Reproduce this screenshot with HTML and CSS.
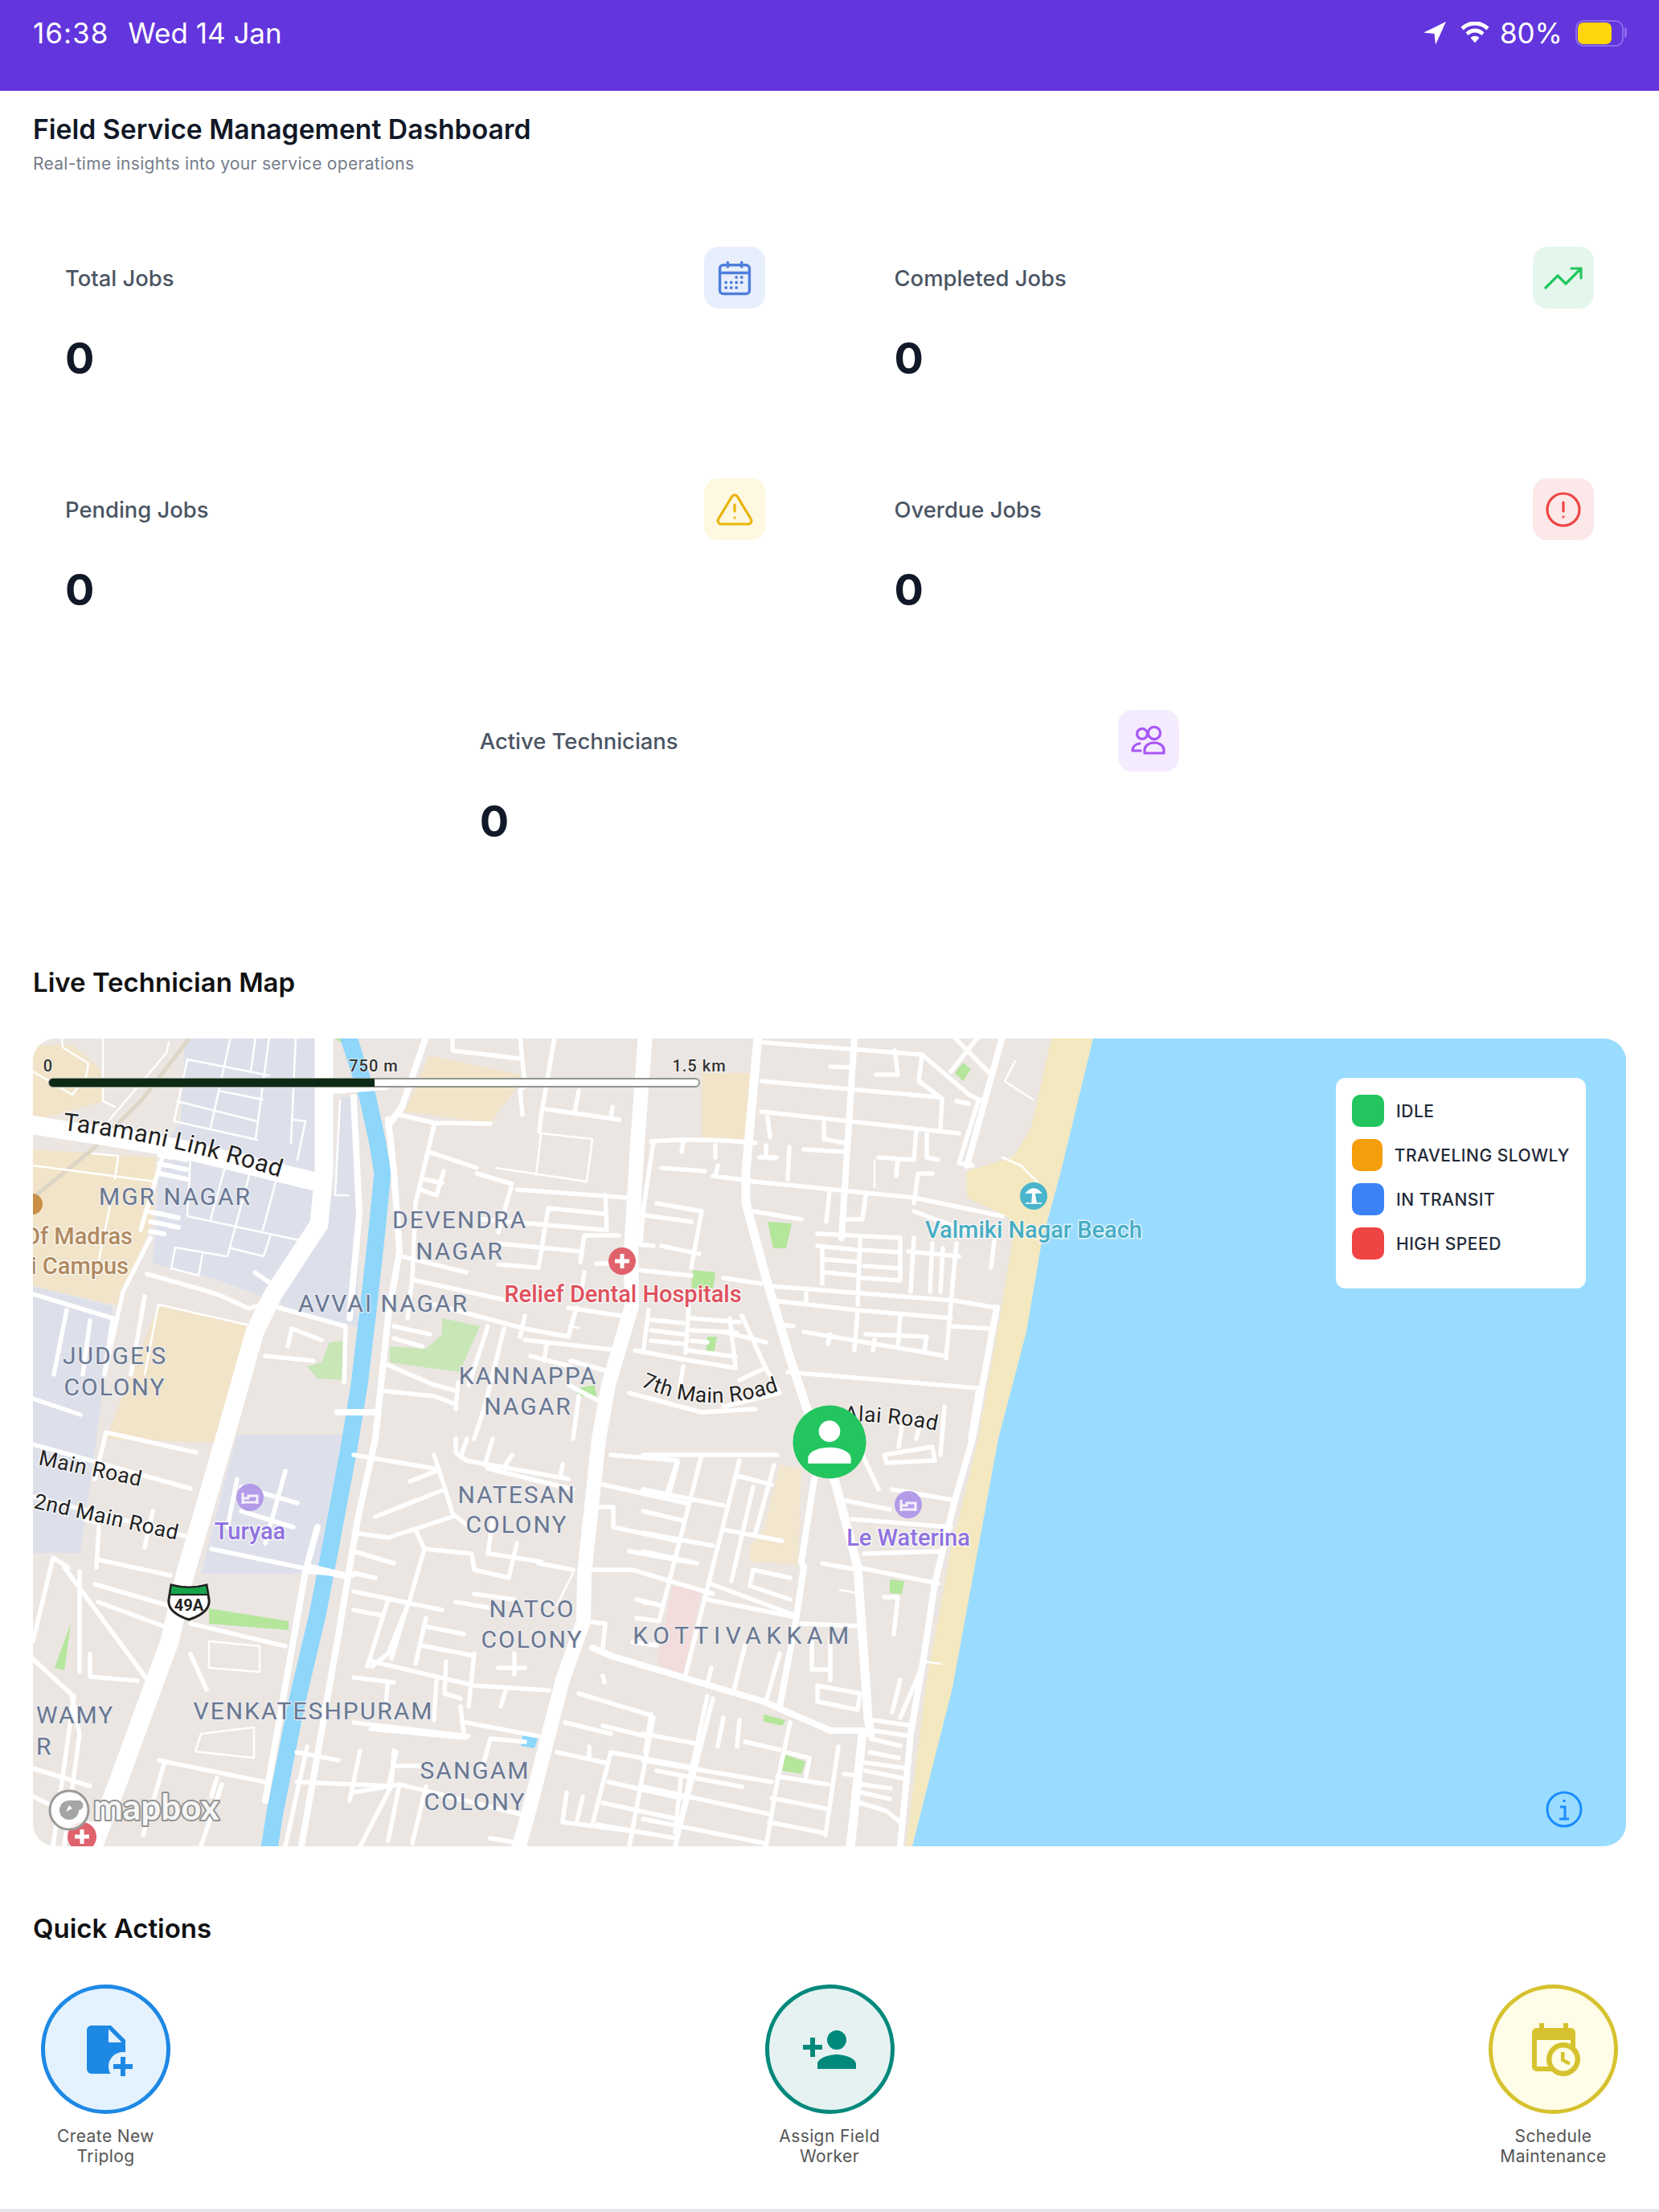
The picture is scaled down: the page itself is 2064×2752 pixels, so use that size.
FILE: index.html
```html
<!DOCTYPE html>
<html lang="en">
<head>
    <meta charset="UTF-8">
    <title>Field Service Management Dashboard</title>
    <link rel="stylesheet" href="styles.css">
</head>
<body>
    <div class="statusbar">
        <div class="status-left">
            <span class="status-time">16:38</span>
            <span>Wed 14 Jan</span>
        </div>
        <div class="status-right">
            <svg class="status-arrow" viewBox="0 0 28 28"><path d="M27 1 1 13.5l12.5 1.5 1.5 12.5z"/></svg>
            <svg class="status-wifi" viewBox="0 0 40 28"><path d="M20 27l-5.8-6.6a8 8 0 0 1 11.6 0zM11.300 17.200 7.900 13.400a17 17 0 0 1 24.200 0l-3.400 3.800a12 12 0 0 0-17.400 0zM5 10.200 1.500 6.300a26.500 26.500 0 0 1 37 0L35 10.200a21.500 21.500 0 0 0-30 0z"/></svg>
            <span>80%</span>
            <div class="battery"><div class="battery-level"></div></div>
        </div>
    </div>

    <main class="page">
        <h1 class="title">Field Service Management Dashboard</h1>
        <p class="subtitle">Real-time insights into your service operations</p>

        <section class="stats">
            <div class="stat-card">
                <div class="stat-head">
                    <span class="stat-label">Total Jobs</span>
                    <div class="stat-icon icon-blue">
                        <svg class="icon-large" viewBox="0 0 24 24"><rect x="3.500" y="4.500" width="17" height="16.500" rx="2"/><path d="M3.500 9h17M8 3v2.500M16 3v2.500"/><path class="dots" d="M13 11.500h.01M16 11.500h.01M7 14.500h.01M10 14.500h.01M13 14.500h.01M16 14.500h.01M7 17.500h.01M10 17.500h.01M13 17.500h.01"/></svg>
                    </div>
                </div>
                <div class="stat-value">0</div>
            </div>
            <div class="stat-card">
                <div class="stat-head">
                    <span class="stat-label">Completed Jobs</span>
                    <div class="stat-icon icon-green">
                        <svg viewBox="0 0 24 24"><path d="M1 18l7.500-7.500 5 5L23 6M17 6h6v6"/></svg>
                    </div>
                </div>
                <div class="stat-value">0</div>
            </div>
            <div class="stat-card">
                <div class="stat-head">
                    <span class="stat-label">Pending Jobs</span>
                    <div class="stat-icon icon-yellow">
                        <svg viewBox="0 0 24 24"><path d="M10.290 3.860 1.820 18a2 2 0 0 0 1.710 3h16.940a2 2 0 0 0 1.710-3L13.710 3.860a2 2 0 0 0-3.420 0zM12 9v4M12 17h.01"/></svg>
                    </div>
                </div>
                <div class="stat-value">0</div>
            </div>
            <div class="stat-card">
                <div class="stat-head">
                    <span class="stat-label">Overdue Jobs</span>
                    <div class="stat-icon icon-red">
                        <svg viewBox="0 0 24 24"><circle cx="12" cy="12" r="10"/><path d="M12 7.500v5.500M12 16.500h.01"/></svg>
                    </div>
                </div>
                <div class="stat-value">0</div>
            </div>
            <div class="stat-card">
                <div class="stat-head">
                    <span class="stat-label">Active Technicians</span>
                    <div class="stat-icon icon-purple">
                        <svg viewBox="0 0 24 24"><circle cx="8" cy="7.500" r="3.200"/><circle cx="15.500" cy="7" r="3.800"/><path d="M9.500 19.500v-2a6 4.500 0 0 1 12 0v2zM6.500 13.500C4 13.800 2 15.500 2 18h5"/></svg>
                    </div>
                </div>
                <div class="stat-value">0</div>
            </div>
        </section>

        <h2 class="section-title map-title">Live Technician Map</h2>
        <div class="map">
            <svg class="map-canvas" viewBox="41 1292 1982 1005" width="1982" height="1005">
                <defs>
                    <path id="taramani" d="M78 1406Q210 1420 365 1470"/>
                    <path id="seventh" d="M797 1724Q880 1764 975 1728"/>
                    <path id="alai" d="M1050 1768Q1115 1768 1185 1784"/>
                </defs>

                <rect class="land" x="41" y="1292" width="1982" height="1005"/>

                <!-- land use -->
                <path class="grey" d="M230 1292H395V1530L335 1600 330 1615 270 1592 190 1572 200 1430 225 1395zM425 1365H447L445 1650 380 1640 345 1620 395 1540 415 1480zM41 1600 140 1625 120 1790 100 1932H41zM295 1785H430L408 1958 250 1958z"/>
                <path class="tan" d="M41 1300H90L125 1330 130 1370 41 1395zM41 1430 195 1440 190 1520 170 1570 150 1625 41 1600zM197 1623 310 1650 276 1795 132 1790zM533 1313 647 1337V1347L610 1397 503 1383 520 1347zM873 1335H935V1417H873z"/>
                <path class="tan-light" d="M970 1823 997 1827 993 1947 933 1943V1923L950 1903z"/>
                <path class="pink" d="M837 1973 873 1977 850 2083 817 2070z"/>
                <path class="park" d="M550 1640 597 1650 572 1707 485 1695V1675L530 1678 550 1660zM382 1700 400 1695 410 1670 428 1668V1717L395 1715z"/>
                <path class="green" d="M862 1580 890 1583 887 1603H860zM880 1663H892L888 1685H878zM720 1727 740 1723 742 1737H718zM955 1520 985 1522 978 1553H962zM1198 1322 1208 1330 1198 1345 1188 1335zM1107 1965 1125 1967 1122 1983 1107 1982zM950 2133 977 2140 973 2147 950 2142zM977 2183 1002 2192 997 2207 973 2203zM260 2001 359 2017V2028L260 2020zM88 2020 80 2078 68 2075zM417 1292H428L432 1302z"/>

                <!-- sand and sea -->
                <path class="sand" d="M1308 1292H1360L1320 1457 1296 1545 1277 1657 1242 1790 1185 2100 1135 2297H1127L1153 2090 1183 1930 1217 1790 1247 1623 1262 1530 1253 1513 1203 1490V1457L1260 1440 1283 1403z"/>
                <path class="sea" d="M1360 1292H2023V2297H1135L1185 2100 1242 1790 1277 1657 1296 1545 1320 1457z"/>
                <path class="pond" d="M650 2158 670 2160 665 2175 648 2172z"/>
                <path class="canal" d="M432 1285 457 1363 470 1423 476 1460 468 1540 458 1630 447 1723 434 1802 411 1926 395 2009 369 2119 342 2255 335 2300"/>

                <!-- rail line and thin paths -->
                <path class="rail" d="M237 1290 175 1370 115 1430 41 1490"/>
                <path class="r2" d="M233 1318 217 1393M233 1318 335 1338M287 1290 262 1403M318 1290 312 1333M335 1290 318 1417M368 1290 362 1423M272 1357 327 1368M220 1370 320 1395M217 1395 320 1418M365 1393 380 1395 370 1443M282 1445 262 1517M312 1455 283 1563M345 1463 327 1530M237 1440 233 1513 372 1543M337 1535 328 1563 288 1553M218 1552 282 1563M218 1552 213 1578 247 1587 252 1560M77 1290 78 1303 110 1323 107 1340 90 1362 41 1333M128 1290V1370L143 1377M210 1297 207 1310 133 1397M115 1435 147 1438 143 1467M41 1450 193 1470M137 1500 123 1567M197 1623 307 1648M197 1623 180 1710M423 1370 417 1487H433M673 1410 737 1417 730 1470 617 1453M673 1410 667 1463M1088 1443V1477M1247 1440 1270 1450 1290 1470M1263 1320 1250 1345 1285 1368M1100 1987H1117M1150 2067 1170 2070M260 2042 323 2048V2080L260 2075zM250 2157 316 2149V2187L243 2179zM713 1957 693 1997M800 1995 820 1997M1045 1978 1067 1982M708 1650 720 1652"/>

                <!-- streets -->
                <path class="r5" d="M183 1585 270 1610 310 1628 335 1620M317 1583 337 1597M41 1610 140 1640M83 1630 67 1710M112 1643 103 1710M140 1643 130 1710M347 1627 430 1650 428 1720M330 1687 390 1693M363 1653 400 1667M363 1653 358 1675M207 1423 175 1530M187 1540 153 1607 130 1710M180 1613 163 1710M563 1290V1307L647 1317M647 1290 653 1350 647 1357 650 1387M690 1290 673 1390 671 1408M680 1380 770 1393M720 1357 715 1383M762 1377 760 1390M497 1387 540 1397 610 1398M540 1400 517 1497 513 1590 507 1640M533 1433 593 1453M593 1460 637 1473 620 1533M552 1457 543 1487 523 1480M527 1467 550 1472M643 1480 780 1490M753 1487 755 1530M682 1503 670 1577M682 1503 750 1510M600 1517 750 1530M620 1547 723 1557M727 1537H770M727 1537 722 1570M620 1573 667 1577M727 1583 723 1607M742 1572H760M793 1580 860 1587M500 1563 580 1583M517 1593 627 1617M490 1650 535 1660M490 1665 525 1675M480 1697 540 1723 567 1730M473 1730 540 1737 567 1747M570 1720 567 1753M540 1623 653 1653 707 1663M707 1627 773 1637M653 1637 647 1663M607 1650 583 1723M627 1653 603 1750 590 1790M717 1627 707 1663M653 1667 770 1680M680 1673 677 1693M660 1687 710 1700M710 1693 760 1707M707 1723 753 1747M720 1737 713 1790M813 1420 800 1507 797 1547M810 1420Q870 1415 940 1422M850 1422 848 1433M890 1425V1440M823 1453 877 1457M887 1463 940 1470M893 1450 890 1463M817 1497 873 1507 860 1577M803 1512 860 1520M793 1548 813 1550M823 1550 870 1560M807 1630 800 1683M857 1625 853 1683M810 1642 850 1646M810 1655 850 1660M810 1668 850 1672M860 1640 920 1645M860 1655 917 1658M860 1668 880 1670M857 1680 915 1688M783 1733 873 1757 940 1753M790 1680 855 1692 915 1702M850 1700 846 1725M908 1640 915 1700"/>
                <path class="r5" d="M950 1297 1147 1312 1207 1363 1223 1370M1217 1370 1193 1447 1210 1450M1187 1290 1233 1337M1217 1290 1183 1333M1147 1313 1143 1345 1172 1367 1170 1403M948 1345 1167 1365M947 1383 1193 1410M1190 1370 1205 1373M1113 1307 1117 1337 1090 1337M1033 1327 1060 1328M1140 1405 1137 1443 1093 1440M1153 1407V1440L1167 1443M1117 1442 1115 1463M1160 1460H1142L1137 1497M937 1470 1137 1490 1247 1513M1137 1507 1207 1533M1000 1430 1050 1433M982 1427 980 1467M953 1425V1440L965 1441M945 1440H966M955 1390 958 1415M1025 1397V1417L1050 1422M1032 1482 1028 1520M1077 1487 1073 1517 1050 1517M937 1507 997 1517M1017 1535 1120 1540M1017 1550 1067 1555M1023 1553V1597M1070 1543 1067 1623M1027 1567 1067 1570M1027 1583 1067 1587M1073 1555 1120 1558M1075 1575 1120 1578M1120 1540V1593L1073 1590M1137 1540 1133 1607M1160 1547 1157 1607M1173 1553 1170 1607M1190 1547 1183 1620M1130 1557 1193 1563M1237 1543 1233 1577M957 1600 1187 1618 1240 1627M900 1590 947 1597M1003 1603V1620M960 1618 1067 1630 1183 1640M1067 1630 1063 1680M1120 1637 1117 1677M1183 1623 1177 1690M1183 1650 1233 1653M1000 1657 1177 1687M973 1648 987 1650M1077 1660 1153 1663 1150 1680M1033 1660 1030 1672M1088 1667 1086 1680M980 1707 1217 1727M923 1637 953 1703 970 1733M900 1657 953 1670M920 1717 950 1703M900 1750 970 1733M1217 1727 1207 1790"/>
                <path class="r5" d="M540 1810 553 1850 563 1883 580 1897M440 1810 540 1827M510 1843 543 1830M467 1887 553 1853M440 1907 483 1913 563 1887M517 1903 528 1927 587 1933 590 1953 633 1963 643 1920M528 1927 510 1990 483 2057 463 2073M607 1933 613 1890M567 1790V1807L580 1817 707 1840M581 1790 573 1813M613 1790 603 1823M637 1810 627 1826M700 1822 697 1838M607 1827 713 1853M670 1945 713 1953M610 1933 673 1943M567 1993 607 2000M590 1983 640 1990M440 1930 490 1945M440 1957 467 1963M440 1980 550 2003M440 2003 477 2010M483 1990 457 2073M507 1997 487 2063M530 2013 517 2070M527 2023 577 2033M523 2047 590 2060M463 2067 590 2097 683 2103M590 2057 583 2123M555 2067 553 2107 573 2113M640 2057V2083M620 2075H653M440 2087 490 2093M482 2097 480 2123M543 2090 540 2140M630 2100 623 2123M580 2143 670 2160M440 2143 583 2160M573 2123 577 2157M610 2163 653 2167M610 2163 600 2200M493 2180 483 2223M493 2197H527M440 2230 497 2220 647 2257M497 2220 483 2290M530 2223 513 2293M610 2287 647 2293M760 1810 843 1817 830 1857M750 1847 853 1870M747 1875H763V1900L843 1917M783 1930 867 1945M737 1953H787L887 1983M873 1810 820 2017M920 1817 853 2083M792 1990 820 1997M792 2013 820 2017M787 2043 817 2047M737 2018 753 2020 750 2050M720 2107 807 2133M750 2085 752 2093M810 2133 803 2180M703 2143 760 2157M750 2147 803 2160M693 2180 753 2193M733 2173V2187M760 2180 737 2270M760 2180 867 2200M757 2217 847 2237M750 2243 843 2263M743 2270 840 2287M813 2137 783 2297M887 2113 840 2297M700 2267 800 2280M705 2230 700 2265M725 2235 718 2265M800 1810H967M843 1820 833 1857M937 1850 910 1967M963 1823 940 1907M917 1836 960 1847M900 1903 973 1917M800 1853 900 1873M800 1880 850 1892M800 1907 887 1923M800 1930 867 1945M800 1957 833 1967M883 1970 990 2010M880 1990 990 2012M933 1973 937 1953 983 1963M933 1973 983 1990M1023 1945 1067 1953M1067 1950 1167 1970M1100 1987H1117L1112 2033M997 2020 1067 2023M1010 2040V2077H1032M1033 2040V2090M970 2057 953 2117M927 2047 913 2103M885 2075 880 2095M1017 2097V2117L1067 2127 1070 2107zM1150 2067 1120 2137M1110 2130 1120 2090M1086 2140 1135 2147M1086 2153 1133 2160M1083 2163 1120 2172M1082 2180 1118 2187M1077 2193 1128 2200M1077 2203 1127 2213M1072 2220 1108 2225M1072 2230 1107 2238M1070 2243 1103 2253 1120 2267M1043 2173 1027 2283M1050 2207 1067 2209M983 2143 967 2217 953 2297M967 2210 1030 2220M1007 2187 1003 2210M977 2180 1007 2187M960 2237 1027 2250M957 2267 1023 2280M880 2110 840 2297M920 2140 917 2173M900 2137 893 2173M927 2167 970 2177M800 2157 870 2170M800 2190 960 2217M817 2203 923 2223M800 2223 957 2257M847 2213 840 2280M800 2263 950 2293M1060 1890 1183 1900M1110 1853 1190 1867M1053 1867 1107 1878M1075 1933 1173 1930"/>
                <path class="r5" d="M41 1797 237 1852M41 1862 230 1911M132 1782 244 1807M132 1782 118 1840M41 1740 100 1760M263 1927 421 1960M66 1938 41 2042M66 1938 85 1950M118 1971 211 1998M122 1993 211 2026M99 1955 99 2080M80 1950 184 2091M112 2058V2086L171 2091M41 2064 89 2108 99 2157 80 2297M237 2058 257 2102M237 2020 355 2048M198 2190 329 2217M204 2195 178 2283M270 2212 263 2235M276 2220 250 2297M369 2180 421 2190M382 2173 355 2297M448 2178 435 2240M490 2178 487 2222 369 2217M487 2222 448 2297M461 2151 579 2162M41 2200 112 2222M41 2235 118 2272M92 2110 66 2297M120 1940 212 1960M123 1900 120 1950M190 1880 180 1925M105 1890 123 1895M380 1955 440 1960M270 1830 240 1930M295 1840 283 1900M355 1830 330 1920M300 1850 370 1870M300 1880 365 1900"/>
                <path class="r5" d="M1073 1810 1093 1853M1100 1810 1160 1800 1163 1817 1103 1820zM1175 1750 1170 1810M1118 1800 1122 1775M1140 1790 1145 1770"/>

                <!-- main roads -->
                <path class="r8" d="M403 1358 480 1352M483 1400 500 1377 530 1290M483 1393 490 1457 497 1557 483 1637 467 1790 445 1890 420 2040 375 2297M440 1365 447 1510 435 1640M395 1900 380 1955 330 2240M420 1757H465M382 1949 428 1960M1063 1290 1047 1540M1247 1290 1203 1450M1013 1840 997 1943 1000 1950 990 2017 970 2123M1240 1627 1210 1790 1187 1870 1163 1970 1150 2057 1133 2157 1120 2297M737 2050 760 2060 950 2117 1033 2153H1073"/>
                <path class="r10" d="M943 1290 928 1457V1497L953 1590 983 1690 1003 1750 1040 1847 1067 1950 1080 2137 1083 2157M1073 2157 1060 2280 1058 2297"/>
                <path class="r18" d="M803 1285 793 1423 785 1557 786 1625 757 1723 745 1790 727 1957 726 2017 700 2090 657 2257 645 2300"/>
                <path class="r22" d="M403 1285V1457L397 1523 340 1610 317 1657 283 1777 230 1960 211 2042 145 2222 115 2300M30 1398 220 1428 400 1472"/>

                <!-- zebra crossing blocks -->
                <path class="zebra" d="M198 1437 214 1440M198 1448 214 1451M198 1460 214 1463M218 1440 232 1443M218 1452 232 1455M218 1464 232 1467M187 1508 204 1511M187 1520 204 1523M187 1532 204 1535M208 1512 222 1515M208 1524 222 1527"/>

                <!-- pois -->
                <circle class="poi-edge" cx="40" cy="1498" r="13"/>
                <circle class="poi-red" cx="774" cy="1569" r="17"/>
                <path class="poi-glyph" d="M774 1560v18M765 1569h18"/>
                <circle class="poi-purple" cx="311" cy="1863" r="17"/>
                <path class="poi-bed" d="M302 1857v12h18v-8h-11v3h-7M320 1869v2M302 1869v2"/>
                <circle class="poi-purple" cx="1130" cy="1872" r="17"/>
                <path class="poi-bed" d="M1121 1866v12h18v-8h-11v3h-7M1139 1878v2M1121 1878v2"/>
                <circle class="poi-teal" cx="1286" cy="1488" r="17"/>
                <path class="poi-palm" d="M1277 1484Q1286 1474 1295 1484H1287L1289 1496H1284L1285 1484zM1276 1497H1296"/>
                <circle class="poi-red" cx="102" cy="2285" r="18"/>
                <path class="poi-glyph" d="M102 2276v18M93 2285h18"/>

                <!-- road shield -->
                <path class="shield" d="M213 1972Q235 1978 257 1972L260 1990Q262 2006 235 2015 208 2006 210 1990z"/>
                <path class="shield-top" d="M213 1972Q235 1978 257 1972L259 1984H211z"/>
                <text class="shield-text" x="235" y="2004">49A</text>

                <!-- labels -->
                <text class="road-label road-large"><textPath href="#taramani">Taramani Link Road</textPath></text>
                <text class="road-label"><textPath href="#seventh">7th Main Road</textPath></text>
                <text class="road-label"><textPath href="#alai">Alai Road</textPath></text>
                <text class="road-label" transform="translate(47 1822) rotate(12)">Main Road</text>
                <text class="road-label" transform="translate(41 1876) rotate(12.500)">2nd Main Road</text>

                <text class="area" x="218" y="1499">MGR NAGAR</text>
                <text class="area" x="572" y="1528">DEVENDRA</text>
                <text class="area" x="572" y="1567">NAGAR</text>
                <text class="area" x="477" y="1632">AVVAI NAGAR</text>
                <text class="area" x="657" y="1722">KANNAPPA</text>
                <text class="area" x="657" y="1760">NAGAR</text>
                <text class="area" x="143" y="1697">JUDGE'S</text>
                <text class="area" x="143" y="1736">COLONY</text>
                <text class="area" x="643" y="1870">NATESAN</text>
                <text class="area" x="643" y="1907">COLONY</text>
                <text class="area" x="662" y="2012">NATCO</text>
                <text class="area" x="662" y="2050">COLONY</text>
                <text class="area area-wide" x="925" y="2045">KOTTIVAKKAM</text>
                <text class="area" x="390" y="2139">VENKATESHPURAM</text>
                <text class="area" x="591" y="2213">SANGAM</text>
                <text class="area" x="591" y="2252">COLONY</text>
                <text class="area area-left" x="45" y="2144">WAMY</text>
                <text class="area area-left" x="45" y="2183">R</text>

                <text class="place tan-text" x="165" y="1548">Of Madras</text>
                <text class="place tan-text" x="160" y="1585">i Campus</text>
                <text class="place red-text" x="775" y="1620">Relief Dental Hospitals</text>
                <text class="place purple-text" x="311" y="1915">Turyaa</text>
                <text class="place purple-text" x="1130" y="1923">Le Waterina</text>
                <text class="place teal-text" x="1286" y="1540">Valmiki Nagar Beach</text>

                <!-- scale bar -->
                <rect class="scale-rest" x="61" y="1342" width="809" height="10" rx="5"/>
                <path class="scale-done" d="M466 1342H66a5 5 0 0 0 0 10H466z"/>
                <text class="scale-text" x="60" y="1333">0</text>
                <text class="scale-text" x="465" y="1333">750 m</text>
                <text class="scale-text" x="870" y="1333">1.5 km</text>

                <!-- mapbox logo -->
                <circle class="logo-ring" cx="86" cy="2252" r="24"/>
                <path class="logo-mark" d="M86 2240a12 12 0 1 0 12 12 4 4 0 0 0-1-12zM82 2254l4-8 4 4z"/>
                <text class="logo-text" x="116" y="2264">mapbox</text>

                <!-- info button -->
                <circle class="info-ring" cx="1946" cy="2251" r="21"/>
                <path class="info-mark" d="M1946 2239v3M1941 2248h6v15M1940 2263h12"/>

                <!-- technician marker -->
                <circle class="marker" cx="1032" cy="1794" r="45.500"/>
                <svg x="992" y="1754" width="80" height="80" viewBox="0 0 24 24"><path class="marker-person" d="M12 4a4 4 0 0 1 4 4 4 4 0 0 1-4 4 4 4 0 0 1-4-4 4 4 0 0 1 4-4m0 10c4.420 0 8 1.790 8 4v2H4v-2c0-2.210 3.580-4 8-4z"/></svg>
            </svg>

            <div class="legend">
                <div class="legend-row"><span class="swatch swatch-idle"></span>IDLE</div>
                <div class="legend-row"><span class="swatch swatch-slow"></span>TRAVELING SLOWLY</div>
                <div class="legend-row"><span class="swatch swatch-transit"></span>IN TRANSIT</div>
                <div class="legend-row"><span class="swatch swatch-speed"></span>HIGH SPEED</div>
            </div>
        </div>

        <h2 class="section-title actions-title">Quick Actions</h2>
        <div class="actions">
            <div class="action">
                <div class="action-circle action-blue">
                    <svg viewBox="0 0 24 24"><path d="M13.810 22H6c-1.110 0-2-.89-2-2V4c0-1.100.89-2 2-2h8l6 6v5.090c-.33-.05-.66-.09-1-.09-3.310 0-6 2.690-6 6 0 1.070.29 2.070.81 3M13 9h5.500L13 3.500V9m7 9v-3h-2v3h-3v2h3v3h2v-3h3v-2h-3z"/></svg>
                </div>
                <span class="action-label">Create New Triplog</span>
            </div>
            <div class="action">
                <div class="action-circle action-teal">
                    <svg viewBox="0 0 24 24"><path d="M15 14c-2.670 0-8 1.330-8 4v2h16v-2c0-2.670-5.330-4-8-4M6 10V7H4v3H1v2h3v3h2v-3h3v-2m6 2a4 4 0 0 0 4-4 4 4 0 0 0-4-4 4 4 0 0 0-4 4 4 4 0 0 0 4 4z"/></svg>
                </div>
                <span class="action-label">Assign Field Worker</span>
            </div>
            <div class="action">
                <div class="action-circle action-yellow">
                    <svg viewBox="0 0 24 24"><path d="M15 13h1.500v2.820l2.440 1.410-.75 1.300L15 16.690V13m4-5H5v11h4.670C9.240 18.090 9 17.070 9 16a7 7 0 0 1 7-7c1.070 0 2.090.24 3 .67V8M5 21c-1.110 0-2-.9-2-2V5c0-1.110.89-2 2-2h1V1h2v2h8V1h2v2h1a2 2 0 0 1 2 2v6.100c1.240 1.260 2 2.990 2 4.900a7 7 0 0 1-7 7c-1.910 0-3.640-.76-4.900-2H5m11-9.850A4.850 4.850 0 0 0 11.150 16c0 2.680 2.170 4.850 4.850 4.850A4.850 4.850 0 0 0 20.850 16c0-2.680-2.170-4.850-4.850-4.850z"/></svg>
                </div>
                <span class="action-label">Schedule Maintenance</span>
            </div>
        </div>
    </main>
    <div class="bottom-line"></div>
</body>
</html>
```

FILE: styles.css
```css
body{
    margin: 0;
    background-color: white;
    font-family: Inter, "Liberation Sans", sans-serif;
    color: #111827;
    min-height: 2752px;
    display: flex;
    flex-direction: column;
}

/* status bar */
.statusbar{
    height: 113px;
    flex-shrink: 0;
    box-sizing: border-box;
    padding: 20px 41px 0;
    background-color: #6235dd;
    color: white;
    display: flex;
    justify-content: space-between;
    align-items: flex-start;
    font-size: 35px;
    line-height: 42px;
}

.status-left{
    display: flex;
    gap: 24px;
}

.status-time{
    letter-spacing: 1px;
}

.status-right{
    display: flex;
    align-items: center;
    gap: 12px;
}

.status-arrow{
    width: 30px;
    height: 30px;
    margin-right: 4px;
    fill: white;
}

.status-wifi{
    width: 38px;
    height: 28px;
    fill: white;
}

.battery{
    position: relative;
    width: 60px;
    height: 33px;
    box-sizing: border-box;
    margin: 0 3px 0 4px;
    padding: 1px;
    border: 2px solid #8a6cf0;
    border-radius: 10px;
}

.battery::after{
    content: "";
    position: absolute;
    top: 7px;
    right: -6px;
    width: 3px;
    height: 13px;
    background-color: #8a6cf0;
    border-radius: 0 3px 3px 0;
}

.battery-level{
    width: 42px;
    height: 100%;
    background-color: #ffd60a;
    border-radius: 7px;
}

/* page */
.page{
    padding: 28px 41px 0;
}

.title{
    margin: 0;
    font-size: 33.7px;
    line-height: 40px;
    font-weight: 600;
}

.subtitle{
    margin: 9px 0 0;
    font-size: 21px;
    line-height: 28px;
    letter-spacing: 0.3px;
    color: #757d8a;
}

.stats{
    margin-top: 49px;
    display: flex;
    flex-wrap: wrap;
    justify-content: center;
    gap: 36px 81px;
}

.stat-card{
    width: calc((100% - 81px) / 2);
    height: 252px;
    box-sizing: border-box;
    padding: 40px;
}

.stat-head{
    display: flex;
    justify-content: space-between;
    align-items: center;
}

.stat-label{
    font-size: 27.4px;
    font-weight: 500;
    color: #4b5563;
}

.stat-icon{
    width: 76px;
    height: 77px;
    border-radius: 18px;
    display: flex;
    align-items: center;
    justify-content: center;
}

.stat-icon svg{
    width: 48px;
    height: 48px;
    fill: none;
    stroke: currentColor;
    stroke-width: 1.6;
    stroke-linecap: round;
    stroke-linejoin: round;
}

.stat-icon .icon-large{
    width: 52px;
    height: 52px;
}

.stat-icon .dots{
    stroke-width: 1.800;
}

.icon-blue{ background-color: #e8effc; color: #4f7fdc; }
.icon-green{ background-color: #e5f7ec; color: #22c55e; }
.icon-yellow{ background-color: #fef8e0; color: #eab308; }
.icon-red{ background-color: #fce8e8; color: #ef4444; }
.icon-purple{ background-color: #f4ecfe; color: #a855f7; }

.stat-value{
    margin-top: 28px;
    font-size: 54px;
    line-height: 67px;
    font-weight: 700;
}

.section-title{
    margin: 0;
    font-size: 33px;
    line-height: 40px;
    font-weight: 600;
    color: #111111;
}

.map-title{
    margin-top: 107px;
}

.actions-title{
    margin-top: 82px;
}

/* map */
.map{
    position: relative;
    margin-top: 50px;
    height: 1005px;
    border-radius: 28px;
    overflow: hidden;
}

.map-canvas{
    display: block;
}

.map-canvas text{
    font-family: Roboto, "Noto Sans", sans-serif;
    paint-order: stroke;
    stroke-linejoin: round;
}

.land{ fill: #ebe6e2; }
.grey{ fill: #dde0ea; }
.tan{ fill: #f1e4c9; }
.tan-light{ fill: #f2e6cf; }
.pink{ fill: #f3dcdc; }
.park{ fill: #c9e6b6; }
.green{ fill: #b4e69b; }
.sand{ fill: #f3e8bf; }
.sea{ fill: #9adcff; }
.pond{ fill: #8fd6fb; }

.canal{
    fill: none;
    stroke: #8fd6fb;
    stroke-width: 21;
    stroke-linejoin: round;
}

.rail, .r2, .r5, .r8, .r10, .r18, .r22, .zebra{
    fill: none;
    stroke: white;
    stroke-linecap: round;
    stroke-linejoin: round;
}

.rail{ stroke: #ddd6c6; stroke-width: 5; }
.r2{ stroke-width: 2.500; }
.r5{ stroke-width: 5.500; }
.r8{ stroke-width: 8; }
.r10{ stroke-width: 11; }
.r18{ stroke-width: 18; }
.r22{ stroke-width: 23; }
.zebra{ stroke-width: 6; }

.poi-edge{ fill: #c98f45; }
.poi-red{ fill: #e0626c; }
.poi-purple{ fill: #b49be8; }
.poi-teal{ fill: #4ab5cd; }

.poi-glyph{
    fill: none;
    stroke: white;
    stroke-width: 5;
}

.poi-bed{
    fill: none;
    stroke: white;
    stroke-width: 3;
    opacity: 0.85;
}

.poi-palm{
    fill: white;
    stroke: white;
    stroke-width: 1.500;
}

.shield{
    fill: white;
    stroke: #222;
    stroke-width: 3;
}

.shield-top{ fill: #16a34a; stroke: #222; stroke-width: 2; }

.map-canvas .shield-text{
    font-size: 20px;
    font-weight: 700;
    text-anchor: middle;
    fill: #222;
}

.map-canvas .road-label{
    font-size: 26.5px;
    fill: #222;
    letter-spacing: 0.5px;
    stroke: rgba(255, 255, 255, 0.7);
    stroke-width: 3px;
}

.map-canvas .road-large{
    font-size: 30.5px;
}

.map-canvas .area{
    font-size: 30px;
    fill: #6a7790;
    text-anchor: middle;
    letter-spacing: 2px;
    stroke: rgba(235, 238, 245, 0.7);
    stroke-width: 3px;
}

.map-canvas .area-wide{
    letter-spacing: 6.500px;
}

.map-canvas .area-left{
    text-anchor: start;
}

.map-canvas .place{
    font-size: 29px;
    font-weight: 500;
    text-anchor: middle;
    stroke: rgba(255, 255, 255, 0.7);
    stroke-width: 3px;
}

.map-canvas .tan-text{ fill: #b08a60; text-anchor: end; }
.map-canvas .red-text{ fill: #e0505c; }
.map-canvas .purple-text{ fill: #8f72e0; }
.map-canvas .teal-text{ fill: #49adc4; }

.scale-rest{
    fill: white;
    stroke: #8f948f;
    stroke-width: 2;
}

.scale-done{ fill: #0e2a14; }

.map-canvas .scale-text{
    font-size: 20px;
    font-weight: 500;
    fill: #333;
    text-anchor: middle;
    letter-spacing: 1px;
    stroke: rgba(255, 255, 255, 0.6);
    stroke-width: 2px;
}

.logo-ring{
    fill: white;
    fill-opacity: 0.85;
    stroke: #9a9a9a;
    stroke-width: 3;
}

.logo-mark{ fill: #a5a5a5; fill-rule: evenodd; }

.map-canvas .logo-text{
    font-family: Lato, Roboto, sans-serif;
    font-size: 44px;
    font-weight: 700;
    fill: #f6f6f6;
    stroke: #929292;
    stroke-width: 4px;
}

.info-ring, .info-mark{
    fill: none;
    stroke: #1a8cff;
    stroke-width: 3;
}

.marker{ fill: #22c55e; }
.marker-person{ fill: white; }

/* legend */
.legend{
    position: absolute;
    top: 49px;
    right: 50px;
    width: 311px;
    height: 262px;
    box-sizing: border-box;
    padding: 21px 20px;
    display: flex;
    flex-direction: column;
    gap: 15px;
    background-color: white;
    border-radius: 12px;
    font-size: 21px;
    font-weight: 500;
    letter-spacing: 0.5px;
    color: #1f2937;
    white-space: nowrap;
}

.legend-row{
    display: flex;
    align-items: center;
    gap: 15px;
    height: 40px;
}

.swatch{
    width: 40px;
    height: 40px;
    border-radius: 10px;
}

.swatch-idle{ background-color: #22c55e; }
.swatch-slow{ background-color: #f59e0b; }
.swatch-transit{ background-color: #3b82f6; }
.swatch-speed{ background-color: #ef4444; }

/* quick actions */
.actions{
    margin-top: 50px;
    display: flex;
    justify-content: space-between;
}

.action{
    width: 181px;
    display: flex;
    flex-direction: column;
    align-items: center;
}

.action-circle{
    width: 161px;
    height: 161px;
    box-sizing: border-box;
    border: 5px solid;
    border-radius: 50%;
    display: flex;
    align-items: center;
    justify-content: center;
}

.action-circle svg{
    width: 72px;
    height: 72px;
    fill: currentColor;
}

.action-blue{ color: #1e88e5; background-color: #e3f2fd; }
.action-teal{ color: #00897b; background-color: #e6f2f2; }
.action-yellow{ color: #d6c22e; background-color: #fffde7; }

.action-label{
    margin-top: 15px;
    width: 160px;
    text-align: center;
    font-size: 21px;
    line-height: 25px;
    letter-spacing: 0.4px;
    color: #555555;
}

.bottom-line{
    margin-top: auto;
    height: 4px;
    background-color: #e5e7eb;
}
```
